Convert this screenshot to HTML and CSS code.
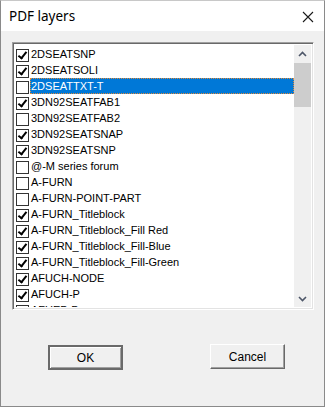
FILE: index.html
```html
<!DOCTYPE html>
<html lang="en">
<head>
    <meta charset="UTF-8">
    <title>PDF layers</title>
    <link rel="stylesheet" href="styles.css">
</head>
<body>
    <div class="dialog">
        <div class="titlebar">
            <span class="title">PDF layers</span>
            <svg class="close" width="12" height="12" viewBox="0 0 12 12">
                <path d="M1 1 L11 11 M11 1 L1 11" stroke="#1a1a1a" stroke-width="1.1" fill="none"/>
            </svg>
        </div>

        <div class="content">
            <div class="listbox">
                <div class="items">
                    <div class="item"><span class="check on"></span><span class="label">2DSEATSNP</span></div>
                    <div class="item"><span class="check on"></span><span class="label">2DSEATSOLI</span></div>
                    <div class="item selected"><span class="check"></span><span class="label">2DSEATTXT-T</span></div>
                    <div class="item"><span class="check on"></span><span class="label">3DN92SEATFAB1</span></div>
                    <div class="item"><span class="check"></span><span class="label">3DN92SEATFAB2</span></div>
                    <div class="item"><span class="check on"></span><span class="label">3DN92SEATSNAP</span></div>
                    <div class="item"><span class="check on"></span><span class="label">3DN92SEATSNP</span></div>
                    <div class="item"><span class="check"></span><span class="label">@-M series forum</span></div>
                    <div class="item"><span class="check"></span><span class="label">A-FURN</span></div>
                    <div class="item"><span class="check"></span><span class="label">A-FURN-POINT-PART</span></div>
                    <div class="item"><span class="check on"></span><span class="label">A-FURN_Titleblock</span></div>
                    <div class="item"><span class="check on"></span><span class="label">A-FURN_Titleblock_Fill Red</span></div>
                    <div class="item"><span class="check on"></span><span class="label">A-FURN_Titleblock_Fill-Blue</span></div>
                    <div class="item"><span class="check on"></span><span class="label">A-FURN_Titleblock_Fill-Green</span></div>
                    <div class="item"><span class="check on"></span><span class="label">AFUCH-NODE</span></div>
                    <div class="item"><span class="check on"></span><span class="label">AFUCH-P</span></div>
                    <div class="item"><span class="check on"></span><span class="label">AFUEP-P</span></div>
                </div>
                <div class="scrollbar">
                    <div class="arrow">
                        <svg width="9" height="6" viewBox="0 0 9 6"><path d="M1 5 L4.5 1.5 L8 5" stroke="#4d5668" stroke-width="1.6" fill="none"/></svg>
                    </div>
                    <div class="track"><div class="thumb"></div></div>
                    <div class="arrow">
                        <svg width="9" height="6" viewBox="0 0 9 6"><path d="M1 1 L4.5 4.5 L8 1" stroke="#4d5668" stroke-width="1.6" fill="none"/></svg>
                    </div>
                </div>
            </div>

            <div class="buttons">
                <button class="btn default">OK</button>
                <button class="btn">Cancel</button>
            </div>
        </div>
    </div>
</body>
</html>
```

FILE: styles.css
```css
body {
    margin: 0;
    background-color: #f0f0f0;
    font-family: "Liberation Sans", Arial, sans-serif;
}
.dialog {
    width: 325px;
    height: 407px;
    box-sizing: border-box;
    border: 1px solid #8a8a8a;
    border-top-color: #c8c8c8;
    background-color: #f0f0f0;
    display: flex;
    flex-direction: column;
}
.titlebar {
    height: 30px;
    background-color: white;
    display: flex;
    align-items: center;
    justify-content: space-between;
    padding: 0 10px 0 8px;
}
.title {
    font-family: "Noto Sans", sans-serif;
    font-size: 13.5px;
    color: #000;
}
.close {
    margin-top: 1px;
}
.content {
    padding: 11px 0 0 11px;
}
.listbox {
    width: 302px;
    height: 268px;
    box-sizing: border-box;
    border: 1px solid;
    border-color: #a0a0a0 #ffffff #ffffff #a0a0a0;
    box-shadow: inset 1px 1px 0 #696969, inset -1px -1px 0 #e3e3e3;
    padding: 2px;
    background-color: white;
    display: flex;
}
.items {
    flex: 1;
    overflow: hidden;
    padding-top: 1px;
}
.item {
    height: 16px;
    display: flex;
    align-items: center;
    font-size: 11px;
    color: #000;
}
.check {
    width: 11px;
    height: 11px;
    margin: 2px 1px 0 1px;
    border: 1px solid #333;
    background-color: white;
    flex-shrink: 0;
    position: relative;
}
.check.on::after {
    content: "";
    position: absolute;
    left: 3px;
    top: 0px;
    width: 3px;
    height: 7px;
    border: solid #000;
    border-width: 0 2px 2px 0;
    transform: rotate(38deg);
}
.label {
    flex: 1;
    height: 16px;
    line-height: 17px;
    padding-left: 1px;
    white-space: nowrap;
    box-sizing: border-box;
}
.selected .label {
    background-color: #0078d7;
    color: white;
    border: 1px dotted #e08a3a;
    line-height: 15px;
    padding-left: 0;
}
.scrollbar {
    width: 17px;
    background-color: #f0f0f0;
    display: flex;
    flex-direction: column;
}
.arrow {
    height: 17px;
    display: flex;
    align-items: center;
    justify-content: center;
}
.track {
    flex: 1;
    padding-top: 1px;
}
.thumb {
    height: 44px;
    background-color: #cdcdcd;
}
.buttons {
    display: flex;
    gap: 87px;
    padding: 34px 0 0 36px;
}
.btn {
    width: 75px;
    height: 25px;
    box-sizing: border-box;
    font-family: "Liberation Sans", Arial, sans-serif;
    font-size: 12px;
    color: #000;
    background-color: #f0f0f0;
    border: 1px solid;
    border-color: #ffffff #696969 #696969 #ffffff;
    box-shadow: inset -1px -1px 0 #a0a0a0;
    padding: 0;
}
.btn.default {
    border: 2px solid #6a6a6a;
    box-shadow: inset 1px 1px 0 #ffffff, inset -1px -1px 0 #a0a0a0;
    margin-top: 1px;
}
```
